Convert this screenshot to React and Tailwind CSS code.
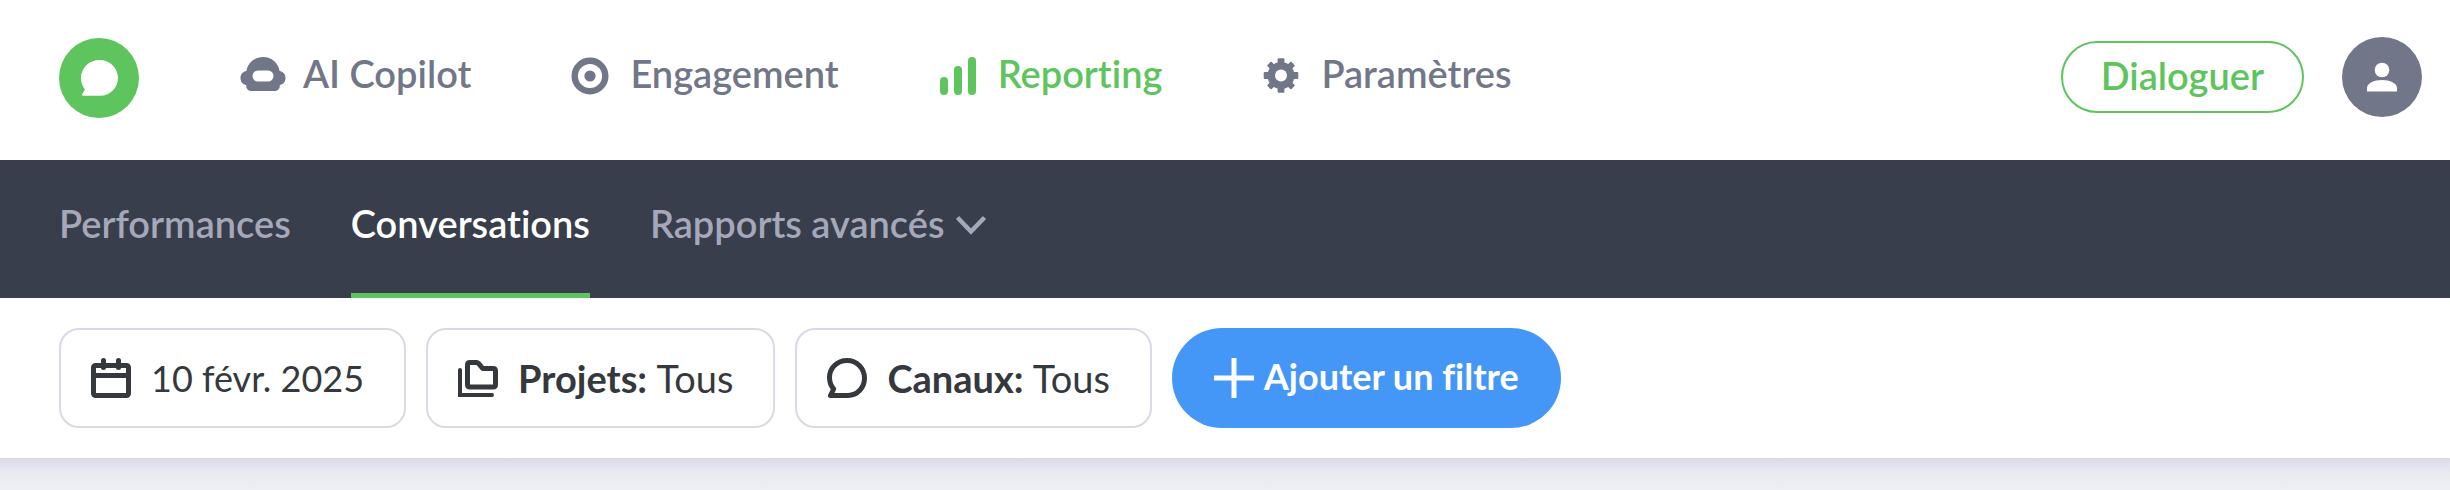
import { useState } from "react";
import clsx from "clsx";

const sections = [
    { id: "copilot", label: "AI Copilot", icon: CopilotIcon },
    { id: "engagement", label: "Engagement", icon: TargetIcon },
    { id: "reporting", label: "Reporting", icon: BarsIcon },
    { id: "settings", label: "Paramètres", icon: GearIcon },
];

const tabs = [
    { id: "performances", label: "Performances" },
    { id: "conversations", label: "Conversations" },
    { id: "advanced", label: "Rapports avancés", menu: true },
];

const filters = [
    { id: "date", value: "10 févr. 2025", icon: CalendarIcon },
    { id: "projects", name: "Projets:", value: "Tous", icon: FoldersIcon },
    { id: "channels", name: "Canaux:", value: "Tous", icon: ChatIcon },
];

export default function App() {
    const [activeTab, setActiveTab] = useState("conversations");

    return (
        <div className="min-h-screen bg-[#eeeff4] font-['Lato',sans-serif] text-[38px] leading-[44px] whitespace-nowrap [font-variant-ligatures:none]">

            {/* Header */}
            <header className="flex items-center justify-between bg-white pt-[37px] pr-7 pb-[43px] pl-[59px]">

                <div className="flex items-center gap-[100px]">
                    <a href="#home" aria-label="Accueil">
                        <Logo />
                    </a>

                    <nav className="flex items-center gap-[95px] pb-1">
                        {sections.map(({ id, label, icon: Icon }) => (
                            <a
                                key={id}
                                href={`#${id}`}
                                className={clsx(
                                    "flex items-center gap-4 font-semibold",
                                    id === "reporting" ? "text-[#5ec55e]" : "text-[#717789]"
                                )}
                            >
                                <Icon />
                                <span className="pb-1">{label}</span>
                            </a>
                        ))}
                    </nav>
                </div>

                <div className="flex items-center gap-[38px]">
                    <button className="rounded-full border-2 border-[#5ec55e] px-[38px] pt-2.5 pb-3.5 font-semibold text-[#5ec55e]">
                        Dialoguer
                    </button>

                    <button aria-label="Mon compte" className="flex size-20 items-center justify-center rounded-full bg-[#717789]">
                        <UserIcon />
                    </button>
                </div>

            </header>

            {/* Tabs */}
            <div className="flex gap-[60px] bg-[#383e4b] px-[59px]">
                {tabs.map((tab) => (
                    <button
                        key={tab.id}
                        onClick={() => setActiveTab(tab.id)}
                        className={clsx(
                            "flex items-center gap-2 border-b-5 pt-[41px] pb-12 font-semibold",
                            activeTab === tab.id
                                ? "border-[#5ec55e] text-white"
                                : "border-transparent text-[#a5a8ba]"
                        )}
                    >
                        {tab.label}
                        {tab.menu && <ChevronIcon />}
                    </button>
                ))}
            </div>

            {/* Filters */}
            <div className="flex gap-5 bg-white px-[59px] py-[30px]">
                {filters.map(({ id, name, value, icon: Icon }) => (
                    <button
                        key={id}
                        className={clsx(
                            "flex items-center gap-5 rounded-[20px] border-2 border-[#d8dae7] py-[26px] pr-10 pl-[30px] text-[#35393d]",
                            !name && "text-[36px]"
                        )}
                    >
                        <Icon />
                        <span>
                            {name && <span className="font-bold">{name} </span>}
                            {value}
                        </span>
                    </button>
                ))}

                <button className="flex items-center gap-2.5 rounded-full bg-[#4497f7] px-[42px] text-[36px] font-bold text-white">
                    <PlusIcon />
                    <span className="pb-1">Ajouter un filtre</span>
                </button>
            </div>

            {/* Shade under the filter bar */}
            <div className="h-8 bg-linear-to-b from-[#dbdbe7] via-[#e9ebf1] to-[#eeeff4]" />

        </div>
    );
}

function Logo() {
    return (
        <svg width="80" height="80" viewBox="0 0 80 80" className="overflow-visible">
            <circle cx="40" cy="41" r="40" fill="#5ec55e" />
            <path
                fill="#fff"
                d="M40.500 23C30 23 22 31 22 41c0 4.500 1.500 8.500 4 11.500l-2.600 4.200c-.6 1 0 2.100 1.200 2.100H41c10 0 18-8 18-17.800s-8-18-18.500-18z"
            />
        </svg>
    );
}

function CopilotIcon() {
    return (
        <svg width="48" height="48" viewBox="0 0 48 48" fill="currentColor">
            <path
                fillRule="evenodd"
                d="M24 6c8.500 0 15.400 6 16.600 14 3.400.4 5.900 3.300 5.900 6.900 0 3.700-2.300 6.600-5.700 7.100v1c0 2.800-2.200 5-5 5H12.200c-2.800 0-5-2.200-5-5v-1c-3.400-.5-5.700-3.400-5.700-7.100 0-3.600 2.500-6.500 5.900-6.900C8.600 12 15.500 6 24 6zm-5 13.500a5.500 5.500 0 0 0 0 11h10a5.500 5.500 0 0 0 0-11z"
            />
        </svg>
    );
}

function TargetIcon() {
    return (
        <svg width="48" height="48" viewBox="0 0 48 48" fill="currentColor">
            <circle cx="24" cy="25" r="15.300" fill="none" stroke="currentColor" strokeWidth="6.400" />
            <circle cx="24" cy="25" r="5.600" />
        </svg>
    );
}

function BarsIcon() {
    return (
        <svg width="48" height="48" viewBox="0 0 48 48" fill="currentColor">
            <rect x="6" y="26" width="8" height="18" rx="4" />
            <rect x="20" y="15" width="8" height="29" rx="4" />
            <rect x="34" y="6" width="8" height="38" rx="4" />
        </svg>
    );
}

function GearIcon() {
    return (
        <svg width="48" height="48" viewBox="0 0 48 48" fill="currentColor">
            <g transform="translate(24 24.500)">
                <rect x="-3.400" y="-17.300" width="6.800" height="34.600" rx="1" />
                <rect x="-17.300" y="-3.400" width="34.600" height="6.800" rx="1" />
                <rect x="-3" y="-17" width="6" height="34" rx="1" transform="rotate(45)" />
                <rect x="-3" y="-17" width="6" height="34" rx="1" transform="rotate(-45)" />
                <circle r="13.500" />
                <circle r="6" fill="#fff" />
            </g>
        </svg>
    );
}

function UserIcon() {
    return (
        <svg width="30" height="30" viewBox="0 0 30 30" fill="#fff">
            <circle cx="15" cy="8" r="7.300" />
            <path d="M0 29.500V26c0-4.500 7-8 15-8s15 3.500 15 8v3.500z" />
        </svg>
    );
}

function ChevronIcon() {
    return (
        <svg width="36" height="36" viewBox="0 0 36 36" fill="none" stroke="currentColor" strokeWidth="4.500">
            <path d="M4.500 12.500 18 26.500 31.500 12.500" />
        </svg>
    );
}

function CalendarIcon() {
    return (
        <svg width="40" height="40" viewBox="0 0 40 40" fill="none" stroke="currentColor" strokeWidth="5">
            <rect x="2.500" y="7.500" width="35" height="30" rx="2" />
            <path d="M2.500 17.500h35" />
            <path d="M12.500 2.500v7M27.500 2.500v7" strokeLinecap="round" />
        </svg>
    );
}

function FoldersIcon() {
    return (
        <svg width="40" height="40" viewBox="0 0 40 40" fill="none" stroke="currentColor">
            <path
                strokeWidth="5"
                strokeLinejoin="round"
                d="M12 4.500h6.500c.8 0 1.500.3 2 .9l4.200 5.100H35c1.500 0 2.500 1 2.500 2.500v13.500c0 1.500-1 2.500-2.500 2.500H12c-1.500 0-2.500-1-2.500-2.500V7c0-1.500 1-2.500 2.500-2.500z"
            />
            <path strokeWidth="4" strokeLinecap="round" d="M2 12v25h32" />
        </svg>
    );
}

function ChatIcon() {
    return (
        <svg width="40" height="40" viewBox="0 0 40 40" fill="none" stroke="currentColor" strokeWidth="5" strokeLinejoin="round">
            <path d="M20 2.500C10 2.500 2.500 10 2.500 19.500c0 5 1.500 8.500 4.200 11.500L3.500 37.500H21c9.500 0 16.500-8 16.500-17.500S30 2.500 20 2.500z" />
        </svg>
    );
}

function PlusIcon() {
    return (
        <svg width="40" height="40" viewBox="0 0 40 40" fill="none" stroke="currentColor" strokeWidth="5">
            <path d="M20 0v40M0 20h40" />
        </svg>
    );
}
